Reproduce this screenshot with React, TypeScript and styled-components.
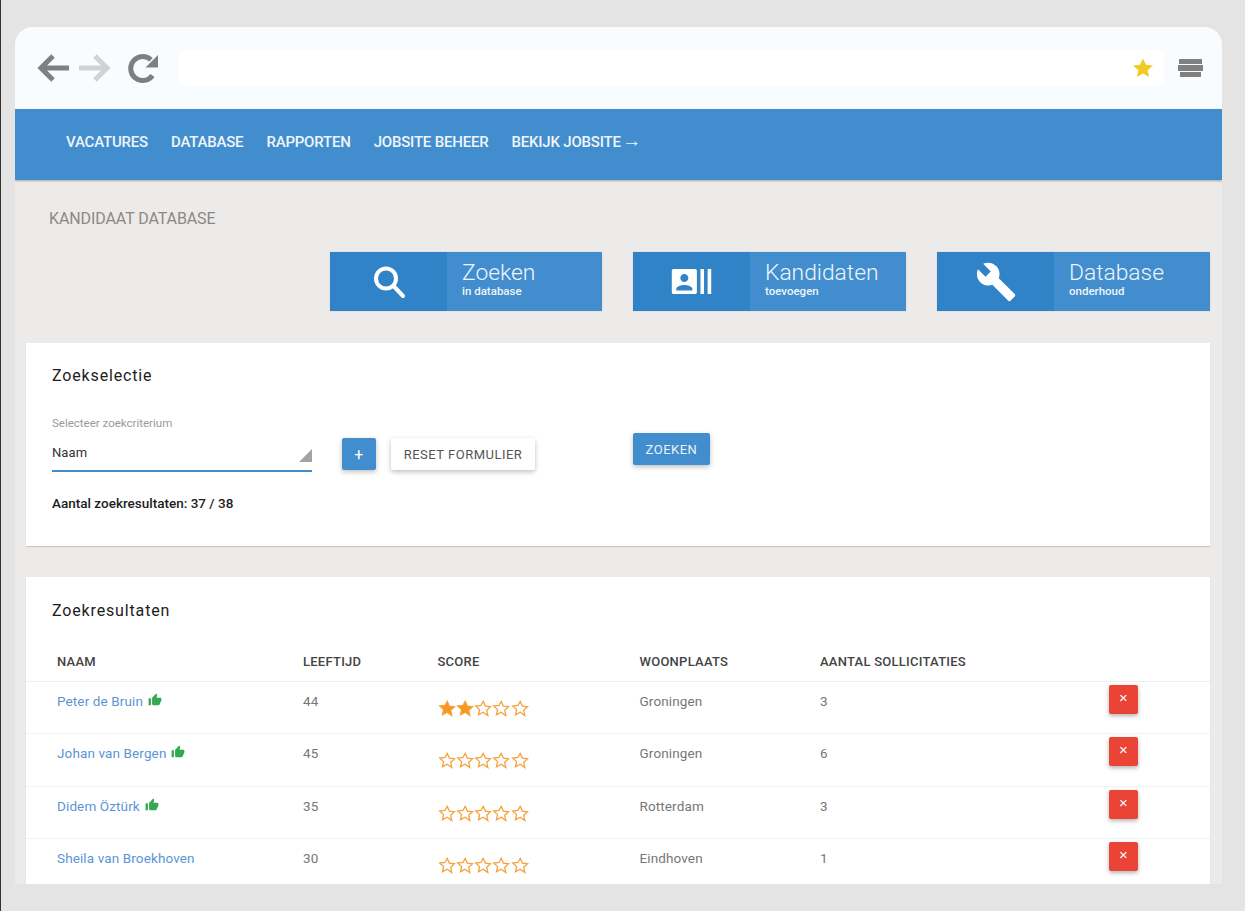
import styled, { createGlobalStyle } from 'styled-components';
import { MdBuild, MdRecentActors, MdThumbUp } from 'react-icons/md';

const BLUE = '#428dcd';
const DARK_BLUE = '#2f83c6';
const STAR_PATH = 'M12 2.6l2.9 6.3 6.9.8-5.1 4.7 1.4 6.8L12 16.9l-6.1 3.4 1.4-6.8-5.1-4.7 6.9-.8z';

const candidates = [
  { name: 'Peter de Bruin', liked: true, age: 44, score: 2, city: 'Groningen', count: 3 },
  { name: 'Johan van Bergen', liked: true, age: 45, score: 0, city: 'Groningen', count: 6 },
  { name: 'Didem Öztürk', liked: true, age: 35, score: 0, city: 'Rotterdam', count: 3 },
  { name: 'Sheila van Broekhoven', liked: false, age: 30, score: 0, city: 'Eindhoven', count: 1 },
];

const tiles = [
  { title: 'Zoeken', sub: 'in database', icon: <SearchIcon /> },
  { title: 'Kandidaten', sub: 'toevoegen', icon: <MdRecentActors size={43} /> },
  { title: 'Database', sub: 'onderhoud', icon: <MdBuild size={42} style={{ transform: 'scaleX(-1) rotate(90deg)' }} /> },
];

function SearchIcon() {
  return (
    <svg width="34" height="34" viewBox="0 0 34 34" fill="none" stroke="white" strokeWidth="4" strokeLinecap="round">
      <circle cx="14" cy="13.5" r="10" />
      <path d="M21.5 21l9.5 10" />
    </svg>
  );
}

const Stars = ({ score }: { score: number }) => (
  <StarRow>
    {[0, 1, 2, 3, 4].map(i => (
      <svg key={i} width="19" height="19" viewBox="0 0 24 24" fill={i < score ? '#f7971e' : 'none'} stroke="#f7a13c" strokeWidth="1.7">
        <path d={STAR_PATH} />
      </svg>
    ))}
  </StarRow>
);

export default function App() {
  return (
    <>
      <GlobalStyle />
      <Page>
        <Browser>
          <Toolbar>
            <NavIcons>
              <svg width="34" height="30" viewBox="0 0 34 30" fill="none" stroke="#7f7f7f" strokeWidth="5">
                <path d="M32 15H5M16 3L4 15l12 12" />
              </svg>
              <svg width="34" height="30" viewBox="0 0 34 30" fill="none" stroke="#d2d2d2" strokeWidth="5">
                <path d="M2 15h27M18 3l12 12-12 12" />
              </svg>
              <ReloadSlot>
                <svg width="32" height="30" viewBox="0 0 32 30" fill="none">
                  <path d="M24.5 22.5A12 12 0 1 1 23 6.8" stroke="#7f7f7f" strokeWidth="5" />
                  <path d="M30 2v12.5H17.5z" fill="#7f7f7f" />
                </svg>
              </ReloadSlot>
            </NavIcons>
            <AddressBar>
              <svg width="22" height="22" viewBox="0 0 24 24" fill="#f0cb24">
                <path d="M12 1.5l3.2 7 7.6.8-5.7 5.1 1.6 7.5L12 18.1l-6.7 3.8 1.6-7.5-5.7-5.1 7.6-.8z" />
              </svg>
            </AddressBar>
            <MenuIcon>
              <MenuBar $width={23} />
              <MenuBar $width={25} />
              <MenuBar $width={21} />
            </MenuIcon>
          </Toolbar>

          <MainNav>
            <NavLink>Vacatures</NavLink>
            <NavLink>Database</NavLink>
            <NavLink>Rapporten</NavLink>
            <NavLink>Jobsite beheer</NavLink>
            <NavLink>
              Bekijk jobsite <NavArrow>→</NavArrow>
            </NavLink>
          </MainNav>

          <Content>
            <PageTitle>KANDIDAAT DATABASE</PageTitle>

            <Tiles>
              {tiles.map(tile => (
                <Tile key={tile.title}>
                  <TileIcon>{tile.icon}</TileIcon>
                  <TileText>
                    <TileTitle>{tile.title}</TileTitle>
                    <TileSub>{tile.sub}</TileSub>
                  </TileText>
                </Tile>
              ))}
            </Tiles>

            <FormCard>
              <CardTitle>Zoekselectie</CardTitle>
              <FieldLabel>Selecteer zoekcriterium</FieldLabel>
              <FormRow>
                <SelectBox>
                  Naam
                  <SelectArrow />
                </SelectBox>
                <AddButton>+</AddButton>
                <ResetButton>RESET FORMULIER</ResetButton>
                <SearchButton>ZOEKEN</SearchButton>
              </FormRow>
              <ResultCount>Aantal zoekresultaten: 37 / 38</ResultCount>
            </FormCard>

            <ResultsCard>
              <ResultsTitle>Zoekresultaten</ResultsTitle>
              <HeaderRow>
                <span>NAAM</span>
                <span>LEEFTIJD</span>
                <span>SCORE</span>
                <span>WOONPLAATS</span>
                <span>AANTAL SOLLICITATIES</span>
              </HeaderRow>
              {candidates.map(c => (
                <Row key={c.name}>
                  <NameCell>
                    {c.name}
                    {c.liked && <MdThumbUp size={14} color="#35a853" />}
                  </NameCell>
                  <span>{c.age}</span>
                  <Stars score={c.score} />
                  <span>{c.city}</span>
                  <span>{c.count}</span>
                  <DeleteButton>×</DeleteButton>
                </Row>
              ))}
            </ResultsCard>
          </Content>
        </Browser>
      </Page>
    </>
  );
}

const GlobalStyle = createGlobalStyle`
  html, body {
    margin: 0;
    background: #e4e4e4;
    font-family: Roboto, 'Liberation Sans', sans-serif;
  }
  * {
    box-sizing: border-box;
  }
`;

const Page = styled.div`
  height: 911px;
  padding: 27px 23px 27px 14px;
  border-left: 1px solid #333;
  overflow: hidden;
`;

const Browser = styled.div`
  height: 857px;
  background: #ecebe9;
  border-radius: 18px 18px 0 0;
  overflow: hidden;
`;

const Toolbar = styled.div`
  height: 82px;
  background: #f8fcff;
  display: flex;
  align-items: center;
  padding: 0 19px 0 22px;
`;

const NavIcons = styled.div`
  width: 142px;
  display: flex;
  align-items: center;
  gap: 6px;
`;

const ReloadSlot = styled.div`
  display: flex;
  margin-left: 11px;
`;

const AddressBar = styled.div`
  width: 985px;
  height: 36px;
  background: white;
  border-radius: 5px;
  display: flex;
  align-items: center;
  justify-content: flex-end;
  padding-right: 10px;
`;

const MenuIcon = styled.div`
  flex: 1;
  display: flex;
  flex-direction: column;
  align-items: flex-end;
  gap: 1px;
`;

const MenuBar = styled.span<{ $width: number }>`
  width: ${props => props.$width}px;
  height: 5.5px;
  margin-right: ${props => (25 - props.$width) / 2}px;
  background: #808080;
`;

const MainNav = styled.nav`
  height: 71px;
  background: ${BLUE};
  box-shadow: 0 1px 2px rgba(0, 0, 0, 0.3);
  position: relative;
  display: flex;
  align-items: center;
  gap: 23px;
  padding: 0 0 5px 51px;
`;

const NavLink = styled.a`
  color: #eef6fc;
  font-size: 15px;
  font-weight: 500;
  letter-spacing: -0.2px;
  text-transform: uppercase;
`;

const NavArrow = styled.span`
  font-size: 19px;
  line-height: 15px;
  font-weight: 400;
  margin-left: -2px;
`;

const Content = styled.div`
  padding: 0 12px 0 11px;
`;

const PageTitle = styled.div`
  color: #8c8885;
  font-size: 16px;
  letter-spacing: -0.1px;
  padding: 29px 0 0 23px;
  line-height: 19px;
`;

const Tiles = styled.div`
  display: flex;
  justify-content: flex-end;
  gap: 31px;
  margin-top: 24px;
`;

const Tile = styled.div`
  width: 273px;
  height: 59px;
  background: ${BLUE};
  display: flex;
  color: #eef6fc;
  box-shadow: 0 0 1px rgba(0, 0, 0, 0.2);

  &:first-child {
    width: 272px;
  }
`;

const TileIcon = styled.div`
  width: 117px;
  background: ${DARK_BLUE};
  display: grid;
  place-items: center;
  color: white;
`;

const TileText = styled.div`
  padding: 7px 0 0 15px;
  display: flex;
  flex-direction: column;
`;

const TileTitle = styled.div`
  font-size: 22.8px;
  font-weight: 300;
  line-height: 27px;
`;

const TileSub = styled.div`
  font-size: 11.5px;
  font-weight: 500;
  line-height: 11px;
`;

const Card = styled.section`
  background: white;
  box-shadow: 0 1px 1px rgba(0, 0, 0, 0.15);
`;

const FormCard = styled(Card)`
  height: 203px;
  margin-top: 32px;
  padding: 23px 26px 0;
`;

const CardTitle = styled.h2`
  margin: 0;
  color: #1c1c1c;
  font-size: 16px;
  font-weight: 400;
  line-height: 19px;
  letter-spacing: 0.85px;
`;

const FieldLabel = styled.div`
  margin-top: 32px;
  color: #9a9a9a;
  font-size: 11.5px;
  line-height: 13px;
`;

const FormRow = styled.div`
  display: flex;
  align-items: flex-start;
  margin-top: 8px;
`;

const SelectBox = styled.div`
  position: relative;
  width: 260px;
  height: 31px;
  margin-top: 3px;
  color: #333;
  font-size: 13px;
  letter-spacing: 0.1px;
  line-height: 17px;
  padding-top: 3px;
  border-bottom: 2px solid ${BLUE};
`;

const SelectArrow = styled.span`
  position: absolute;
  right: 0;
  top: 8px;
  border-style: solid;
  border-width: 0 0 13px 13px;
  border-color: transparent transparent #a3a3a3 transparent;
`;

const RaisedButton = styled.button`
  border: none;
  border-radius: 2px;
  font-family: inherit;
  font-size: 13px;
  font-weight: 400;
  letter-spacing: 0.5px;
  height: 32px;
  box-shadow: 0 2px 5px rgba(0, 0, 0, 0.25);
`;

const AddButton = styled(RaisedButton)`
  width: 34px;
  margin-left: 30px;
  background: ${BLUE};
  color: white;
  font-size: 16px;
  padding: 0;
`;

const ResetButton = styled(RaisedButton)`
  width: 144px;
  margin-left: 15px;
  background: white;
  color: #555;
  padding: 0;
`;

const SearchButton = styled(RaisedButton)`
  width: 77px;
  margin: -5px 0 0 98px;
  background: ${BLUE};
  color: #e8f3fb;
  padding: 0;
`;

const ResultCount = styled.div`
  margin-top: 23.5px;
  color: #1d1d1d;
  font-size: 13.5px;
  font-weight: 500;
  line-height: 15px;
`;

const ResultsCard = styled(Card)`
  margin-top: 31px;
  padding-top: 24px;
`;

const ResultsTitle = styled(CardTitle)`
  padding-left: 26px;
`;

const TableRow = styled.div`
  display: grid;
  grid-template-columns: 246px 134.5px 202px 180.5px 289px 29px;
  padding-left: 31px;
`;

const HeaderRow = styled(TableRow)`
  height: 62px;
  padding-top: 34px;
  color: #444;
  font-size: 13px;
  font-weight: 500;
  line-height: 15px;
  letter-spacing: 0.25px;
  border-bottom: 1px solid #eeeeee;
`;

const Row = styled(TableRow)`
  height: 52.3px;
  padding-top: 11px;
  color: #777;
  font-size: 13.5px;
  letter-spacing: 0.12px;
  line-height: 16px;
  border-bottom: 1px solid #f2f2f2;
`;

const NameCell = styled.span`
  color: #5b95d6;
  display: flex;
  align-items: flex-start;
  gap: 5px;
`;

const StarRow = styled.span`
  display: flex;
  margin: 6px 0 0 0;
  width: 95px;
  & svg {
    flex: 0 0 18.3px;
  }
`;

const DeleteButton = styled.button`
  width: 29px;
  height: 29px;
  margin-top: -8px;
  border: none;
  border-radius: 2px;
  background: #ea4436;
  color: white;
  font-size: 15px;
  line-height: 22px;
  padding: 0 0 3px;
  box-shadow: 0 2px 4px rgba(0, 0, 0, 0.3);
`;
